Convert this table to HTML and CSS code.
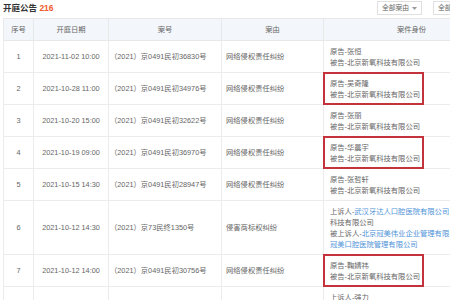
FILE: index.html
```html
<!DOCTYPE html>
<html lang="zh-CN">
<head>
<meta charset="utf-8">
<title>开庭公告</title>
<link rel="stylesheet" href="styles.css">
</head>
<body>
<div class="page">
  <div class="topbar">
    <div class="title">开庭公告 <span class="count">216</span></div>
    <div class="filters">
      <div class="btn">全部案由 <svg class="caret" width="5" height="3" viewBox="0 0 5 3"><path d="M0 0H5L2.5 3Z" fill="#999"/></svg></div>
      <div class="btn">全部年份 <svg class="caret" width="5" height="3" viewBox="0 0 5 3"><path d="M0 0H5L2.5 3Z" fill="#999"/></svg></div>
    </div>
  </div>
  <table class="grid">
    <colgroup>
      <col class="c-no"><col class="c-date"><col class="c-case"><col class="c-cause"><col class="c-party">
    </colgroup>
    <thead>
      <tr><th>序号</th><th>开庭日期</th><th>案号</th><th>案由</th><th>案件身份</th></tr>
    </thead>
    <tbody>
      <tr>
        <td class="center">1</td><td class="center">2021-11-02 10:00</td><td class="case">（2021）京0491民初36830号</td><td>网络侵权责任纠纷</td>
        <td class="party"><div>原告-张恒</div><div>被告-北京新氧科技有限公司</div></td>
      </tr>
      <tr>
        <td class="center">2</td><td class="center">2021-10-28 11:00</td><td class="case">（2021）京0491民初34976号</td><td>网络侵权责任纠纷</td>
        <td class="party"><div>原告-吴奇隆</div><div>被告-北京新氧科技有限公司</div><span class="mark"></span></td>
      </tr>
      <tr>
        <td class="center">3</td><td class="center">2021-10-20 15:00</td><td class="case">（2021）京0491民初32622号</td><td>网络侵权责任纠纷</td>
        <td class="party"><div>原告-张丽</div><div>被告-北京新氧科技有限公司</div></td>
      </tr>
      <tr>
        <td class="center">4</td><td class="center">2021-10-19 09:00</td><td class="case">（2021）京0491民初36970号</td><td>网络侵权责任纠纷</td>
        <td class="party"><div>原告-华晨宇</div><div>被告-北京新氧科技有限公司</div><span class="mark"></span></td>
      </tr>
      <tr>
        <td class="center">5</td><td class="center">2021-10-15 14:30</td><td class="case">（2021）京0491民初28947号</td><td>网络侵权责任纠纷</td>
        <td class="party"><div>原告-张哲轩</div><div>被告-北京新氧科技有限公司</div></td>
      </tr>
      <tr>
        <td class="center">6</td><td class="center">2021-10-12 14:30</td><td class="case">（2021）京73民终1350号</td><td>侵害商标权纠纷</td>
        <td class="party"><div>上诉人-<span class="link">武汉牙达人口腔医院有限公司</span>，北京新氧</div><div>科技有限公司</div><div>被上诉人-<span class="link">北京冠美伟业企业管理有限公司</span>，<span class="link">北京</span></div><div><span class="link">冠美口腔医院管理有限公司</span></div></td>
      </tr>
      <tr>
        <td class="center">7</td><td class="center">2021-10-12 14:00</td><td class="case">（2021）京0491民初30756号</td><td>网络侵权责任纠纷</td>
        <td class="party"><div>原告-鞠婧祎</div><div>被告-北京新氧科技有限公司</div><span class="mark"></span></td>
      </tr>
      <tr>
        <td class="center">8</td><td class="center">2021-09-28 09:30</td><td class="case">（2021）京73民终2105号</td><td>网络侵权责任纠纷</td>
        <td class="party"><div>上诉人-强力</div><div>被上诉人-北京新氧科技有限公司</div><div>原审被告-北京新氧万维科技咨询</div><div>有限公司</div></td>
      </tr>
    </tbody>
  </table>
</div>
</body>
</html>
```

FILE: styles.css
```css
html, body {
  margin: 0;
  padding: 0;
  background: #ffffff;
  overflow: hidden;
}

body {
  font-family: "Liberation Sans", "Noto Sans CJK SC", sans-serif;
  color: #666666;
}

.page {
  width: 496px;
  padding-left: 3px;
}

.topbar {
  display: flex;
  align-items: center;
  justify-content: space-between;
  height: 18px;
  padding-right: 21px;
}

.title {
  font-size: 8.5px;
  font-weight: bold;
  color: #333333;
  line-height: 12px;
  margin-top: -2px;
}

.count {
  color: #f0592b;
}

.filters {
  display: flex;
  gap: 11px;
  margin-top: -2px;
}

.btn {
  width: 45px;
  box-sizing: border-box;
  height: 14px;
  border: 1px solid #e0e0e0;
  background: #fff;
  font-size: 6.8px;
  line-height: 12px;
  color: #666;
  display: flex;
  align-items: center;
  justify-content: center;
  gap: 3px;
  white-space: nowrap;
  overflow: hidden;
}

.caret {
  display: block;
}

.grid {
  width: 496px;
  border-collapse: collapse;
  table-layout: fixed;
  font-size: 7.3px;
  line-height: 11px;
}

.c-no { width: 30px; }
.c-date { width: 75px; }
.c-case { width: 113px; }
.c-cause { width: 102px; }
.c-party { width: 176px; }

.grid th {
  background: #f3f6fa;
  font-weight: normal;
  color: #666;
  padding: 5px 4px;
  border: 1px solid #e8e8e8;
  text-align: center;
  height: 11px;
}

.grid td {
  border: 1px solid #ececec;
  padding: 4.5px 4px;
  vertical-align: middle;
  white-space: nowrap;
  overflow: hidden;
}

.grid td.center {
  text-align: center;
}

.grid td.case {
  padding-left: 1px;
}

.grid td.party {
  padding-left: 6px;
  position: relative;
  overflow: visible;
}

.link {
  color: #4f93d8;
}

.mark {
  position: absolute;
  left: -1px;
  top: -1px;
  bottom: -1px;
  width: 101px;
  border: 2px solid #c4323b;
  box-sizing: border-box;
  pointer-events: none;
}
```
